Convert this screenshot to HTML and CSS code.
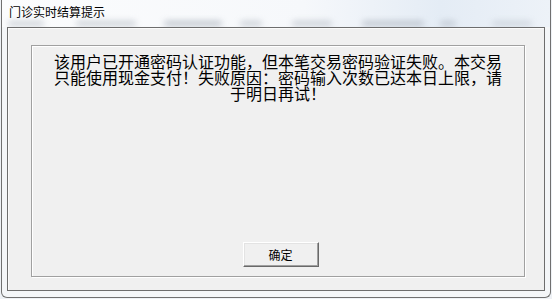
FILE: index.html
```html
<!DOCTYPE html>
<html lang="zh-CN">
<head>
<meta charset="utf-8">
<title>门诊实时结算提示</title>
<link rel="stylesheet" href="styles.css">
</head>
<body>
<div class="window">
  <div class="titlebar">
    <div class="title">门诊实时结算提示</div>
    <div class="glass">
      <span class="blob b1"></span>
      <span class="blob b2"></span>
      <span class="blob b3"></span>
      <span class="blob b4"></span>
      <span class="blob b5"></span>
      <span class="blob b6"></span>
      <span class="blob b7"></span>
      <span class="blob b8"></span>
    </div>
  </div>
  <div class="client">
    <div class="panel">
      <p class="message">该用户已开通密码认证功能，但本笔交易密码验证失败。本交易只能使用现金支付！失败原因：密码输入次数已达本日上限，请于明日再试！</p>
      <div class="actions">
        <button class="btn">确定</button>
      </div>
    </div>
  </div>
</div>
</body>
</html>
```

FILE: styles.css
```css
html, body {
  margin: 0;
  padding: 0;
  width: 552px;
  height: 299px;
  overflow: hidden;
  background: #eef1f5;
}
body {
  font-family: "Noto Sans CJK SC", "Noto Sans", sans-serif;
}
.window {
  margin-left: 1px;
  width: 548px;
  height: 297px;
  border: 1px solid #707070;
  border-top: none;
  border-radius: 0 0 6px 6px;
  background: #f4f6f8;
  display: flex;
  flex-direction: column;
}
.titlebar {
  height: 27px;
  background: linear-gradient(to right, #fbfcfd 0%, #f6f8fb 55%, #e4ecf5 80%, #edf2f8 100%);
  display: flex;
  flex-direction: column;
  overflow: hidden;
}
.title {
  font-size: 12px;
  line-height: 14px;
  height: 14px;
  padding: 5px 0 0 7px;
  color: #000;
}
.glass {
  display: flex;
  height: 8px;
  align-items: center;
  padding-left: 4px;
}
.blob {
  height: 5px;
  background: #a3abb6;
  filter: blur(3px);
  opacity: 0.55;
  border-radius: 3px;
}
.b1 { width: 36px; margin-left: 2px; }
.b2 { width: 60px; margin-left: 32px; }
.b3 { width: 58px; margin-left: 28px; opacity: 0.7; }
.b4 { width: 22px; margin-left: 18px; }
.b5 { width: 40px; margin-left: 30px; }
.b6 { width: 62px; margin-left: 30px; opacity: 0.65; }
.b7 { width: 16px; margin-left: 16px; }
.b8 { width: 40px; margin-left: 36px; opacity: 0.4; }
.client {
  margin: 0 5px;
  height: 262px;
  border: 1px solid #6d6d6d;
  background: #f0f0f0;
  display: flex;
  box-shadow: inset 1px 1px 0 #fbfbfb;
}
.panel {
  margin: 17px 19px 13px 23px;
  flex: 1;
  border: 1px solid #a0a0a0;
  box-shadow: 1px 1px 0 #ffffff, inset 1px 1px 0 #ffffff;
  display: flex;
  flex-direction: column;
}
.message {
  margin: 0;
  padding: 7px 20px 0 20px;
  font-size: 16px;
  line-height: 16px;
  color: #000;
  text-align: center;
}
.actions {
  margin-top: auto;
  padding: 0 0 9px 5px;
  display: flex;
  justify-content: center;
}
.btn {
  width: 76px;
  height: 25px;
  padding: 0;
  font-family: "Noto Sans CJK SC", "Noto Sans", sans-serif;
  font-size: 12px;
  line-height: 14px;
  color: #000;
  background: #f0f0f0;
  border: 1px solid;
  border-color: #ffffff #696969 #696969 #ffffff;
  box-shadow: inset -1px -1px 0 #a0a0a0, inset 1px 1px 0 #e3e3e3;
  border-radius: 0;
}
```
